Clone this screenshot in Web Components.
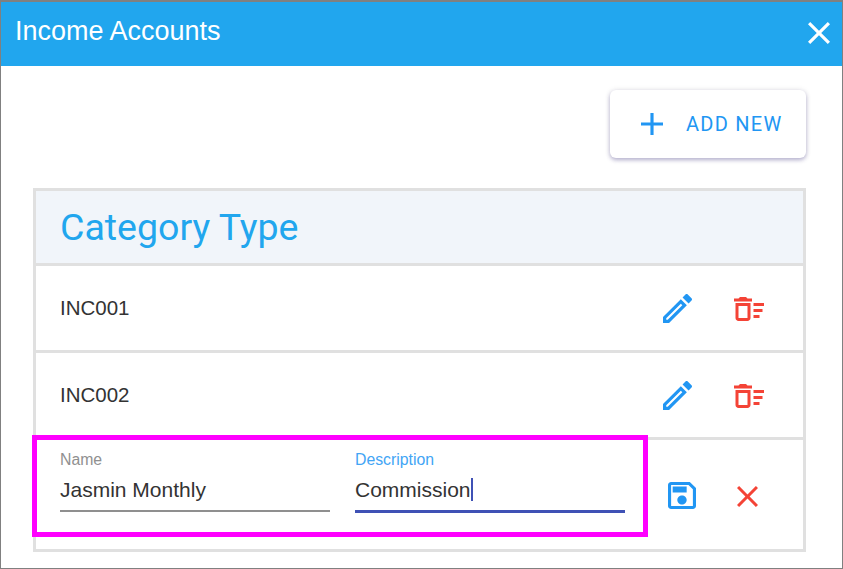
<!DOCTYPE html>
<html lang="en">
<head>
<meta charset="utf-8">
<title>Income Accounts</title>
<style>
  html, body { margin: 0; height: 100%; background: #fff; }
  body { font-family: Roboto, "Liberation Sans", sans-serif; }
</style>
</head>
<body>
<income-dialog>
  <span slot="title">Income Accounts</span>
  <add-button>ADD NEW</add-button>
  <category-table>
    <span slot="heading">Category Type</span>
    <category-row>INC001</category-row>
    <category-row>INC002</category-row>
    <edit-row>
      <text-field label="Name" value="Jasmin Monthly"></text-field>
      <text-field label="Description" value="Commission" focused></text-field>
    </edit-row>
  </category-table>
</income-dialog>

<script>
// material icon paths, cropped by viewBox to the glyph's own bounds
const ICONS = {
  close: ['5 5 14 14', 'M19 6.41 17.59 5 12 10.59 6.41 5 5 6.41 10.59 12 5 17.59 6.41 19 12 13.41 17.59 19 19 17.59 13.41 12z'],
  plus: ['5 5 14 14', 'M19 13h-6v6h-2v-6H5v-2h6V5h2v6h6v2z'],
  pencil: ['3 3 18 18', 'M14.06 9.02l.92.92L5.92 19H5v-.92l9.06-9.06M17.66 3c-.25 0-.51.1-.7.29l-1.83 1.83 3.75 3.75 1.83-1.83c.39-.39.39-1.02 0-1.41l-2.34-2.34c-.2-.2-.45-.29-.71-.29zm-3.6 3.19L3 17.25V21h3.75L17.81 9.94l-3.75-3.75z'],
  trash: ['2 4 20 16', 'M15 16h4v2h-4zm0-8h7v2h-7zm0 4h6v2h-6zM3 18c0 1.1.9 2 2 2h6c1.1 0 2-.9 2-2V8H3v10zm2-8h6v8H5v-8zm5-6H6L5 5H2v2h12V5h-3z'],
  save: ['3 3 18 18', 'M17 3H5c-1.11 0-2 .9-2 2v14c0 1.1.89 2 2 2h14c1.1 0 2-.9 2-2V7l-4-4zm2 16H5V5h11.17L19 7.83V19zm-7-7c-1.66 0-3 1.34-3 3s1.34 3 3 3 3-1.34 3-3-1.34-3-3-3zM6 6h9v4H6z']
};

function icon(name, w, h) {
  const [box, d] = ICONS[name];
  return `<svg width="${w}" height="${h}" viewBox="${box}" preserveAspectRatio="none" fill="currentColor" aria-hidden="true"><path d="${d}"/></svg>`;
}

class ShadowBase extends HTMLElement {
  constructor(html) {
    super();
    this.attachShadow({ mode: 'open' }).innerHTML = html;
  }
}

class IncomeDialog extends ShadowBase {
  constructor() {
    super(`
      <style>
        :host {
          display: flex;
          flex-direction: column;
          box-sizing: border-box;
          width: 843px;
          height: 569px;
          border: 1px solid #808080;
          border-top-width: 2px;
          background: #fff;
          overflow: hidden;
        }
        header {
          display: flex;
          align-items: center;
          justify-content: space-between;
          flex: none;
          height: 64px;
          padding: 0 12px 6px 14px;
          box-sizing: border-box;
          background: #21a6ee;
          color: #fff;
          font: 27px/1 "Liberation Sans", Arial, sans-serif;
        }
        header svg { display: block; margin-top: 3px; }
        main {
          display: flex;
          flex-direction: column;
          align-items: flex-end;
          padding: 24px 36px 0 32px;
          gap: 30px;
        }
      </style>
      <header><slot name="title"></slot>${icon('close', 22, 22)}</header>
      <main><slot></slot></main>
    `);
  }
}

class AddButton extends ShadowBase {
  constructor() {
    super(`
      <style>
        :host {
          display: flex;
          align-items: center;
          box-sizing: border-box;
          width: 196px;
          height: 68px;
          padding: 0 20px 0 31px;
          gap: 23px;
          border-radius: 6px;
          background: #fff;
          color: #2196f3;
          font: 400 20px/1 Roboto, sans-serif;
          letter-spacing: 1.25px;
          white-space: nowrap;
          box-shadow: 0 2px 4px rgba(70, 60, 140, .38), 0 0 6px rgba(0, 0, 0, .08);
        }
        svg { flex: none; }
      </style>
      ${icon('plus', 22, 22)}<slot></slot>
    `);
  }
}

class CategoryTable extends ShadowBase {
  constructor() {
    super(`
      <style>
        :host {
          display: block;
          align-self: stretch;
          position: relative;
          border: 3px solid #e0e0e0;
          border-bottom: 0;
        }
        .head {
          display: flex;
          align-items: center;
          box-sizing: border-box;
          height: 75px;
          padding: 2px 0 0 24px;
          border-bottom: 3px solid #e0e0e0;
          background: #f1f5fa;
          color: #21a6ee;
          font: 400 37.500px/1 Roboto, sans-serif;
        }
      </style>
      <div class="head"><slot name="heading"></slot></div>
      <slot></slot>
    `);
  }
}

class CategoryRow extends ShadowBase {
  constructor() {
    super(`
      <style>
        :host {
          display: flex;
          align-items: center;
          box-sizing: border-box;
          height: 87px;
          padding: 0 39px 0 24px;
          border-bottom: 3px solid #e0e0e0;
          color: #333;
          font: 20.500px/1 "Liberation Sans", Arial, sans-serif;
        }
        .text { flex: 1; }
        .actions { display: flex; gap: 42px; align-items: center; padding-top: 1px; }
        .edit { color: #2196f3; display: flex; }
        .del { color: #f44336; display: flex; }
      </style>
      <div class="text"><slot></slot></div>
      <div class="actions">
        <span class="edit">${icon('pencil', 29, 29)}</span>
        <span class="del">${icon('trash', 30, 24)}</span>
      </div>
    `);
  }
}

class EditRow extends ShadowBase {
  constructor() {
    super(`
      <style>
        :host {
          display: flex;
          align-items: flex-start;
          position: relative;
          box-sizing: border-box;
          height: 112px;
          padding: 10px 45px 0 24px;
          border-bottom: 3px solid #e0e0e0;
        }
        .fields { display: flex; gap: 25px; }
        .actions {
          display: flex;
          align-items: center;
          gap: 41px;
          margin: 32px 0 0 auto;
        }
        .save { color: #2196f3; display: flex; }
        .cancel { color: #f44336; display: flex; margin-top: 1px; }
        .mark {
          position: absolute;
          left: -4px;
          top: -5px;
          width: 606px;
          height: 92px;
          border: 5px solid #ff00ff;
        }
      </style>
      <div class="fields"><slot></slot></div>
      <div class="actions">
        <span class="save">${icon('save', 28, 27)}</span>
        <span class="cancel">${icon('close', 21, 21)}</span>
      </div>
      <div class="mark"></div>
    `);
  }
}

class TextField extends ShadowBase {
  constructor() {
    super(`
      <style>
        :host {
          display: flex;
          flex-direction: column;
          width: 270px;
          font-family: "Liberation Sans", Arial, sans-serif;
        }
        label { font-size: 15.800px; line-height: 18px; padding-top: 1px; color: #909090; }
        .value {
          display: flex;
          align-items: center;
          height: 37px;
          margin-top: 2px;
          padding-bottom: 2px;
          font-size: 21px;
          color: #333;
          border-bottom: 2px solid #8f8f8f;
        }
        .caret { display: none; width: 2px; height: 23px; background: #3f51b5; }
        :host([focused]) label { color: #42a5f5; }
        :host([focused]) .value { border-bottom: 3px solid #3f51b5; }
        :host([focused]) .caret { display: block; }
      </style>
      <label></label>
      <div class="value"><span class="text"></span><span class="caret"></span></div>
    `);
  }
  connectedCallback() {
    this.shadowRoot.querySelector('label').textContent = this.getAttribute('label');
    this.shadowRoot.querySelector('.text').textContent = this.getAttribute('value');
  }
}

customElements.define('income-dialog', IncomeDialog);
customElements.define('add-button', AddButton);
customElements.define('category-table', CategoryTable);
customElements.define('category-row', CategoryRow);
customElements.define('edit-row', EditRow);
customElements.define('text-field', TextField);
</script>
</body>
</html>
